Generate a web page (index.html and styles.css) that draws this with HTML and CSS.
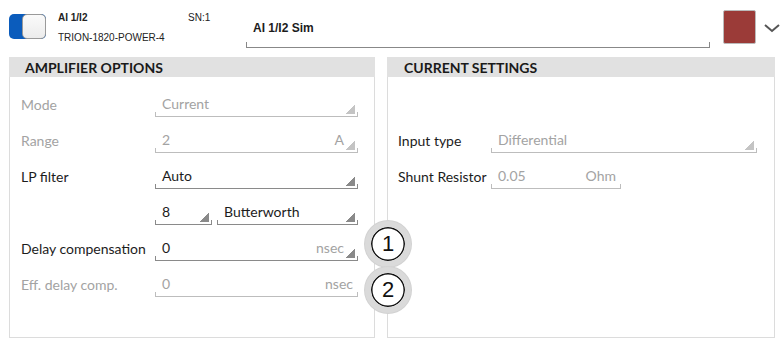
FILE: index.html
```html
<!DOCTYPE html>
<html lang="en">
<head>
  <meta charset="UTF-8">
  <title>AI 1/I2 Settings</title>
  <link rel="stylesheet" href="styles.css">
</head>
<body>
  <!-- Channel header -->
  <div class="topbar">
    <div class="toggle"><span class="knob"></span></div>
    <div class="info">
      <div class="info-line"><b class="ch">AI 1/I2</b><span>SN:1</span></div>
      <div class="info-line">TRION-1820-POWER-4</div>
    </div>
    <div class="name-field">AI 1/I2 Sim</div>
    <div class="swatch"></div>
    <svg class="chevron" width="18" height="10" viewBox="0 0 18 10">
      <path d="M2 2 L9 8 L16 2" fill="none" stroke="#555" stroke-width="2"/>
    </svg>
  </div>

  <div class="panels">
    <!-- Amplifier options -->
    <div class="panel panel-left">
      <div class="panel-head">AMPLIFIER OPTIONS</div>
      <div class="panel-body">
        <div class="row disabled">
          <div class="label">Mode</div>
          <div class="field drop">Current</div>
        </div>
        <div class="row disabled">
          <div class="label">Range</div>
          <div class="field drop">2<span class="unit">A</span></div>
        </div>
        <div class="row">
          <div class="label">LP filter</div>
          <div class="field drop">Auto</div>
        </div>
        <div class="row">
          <div class="label"></div>
          <div class="field drop small">8</div>
          <div class="field drop">Butterworth</div>
        </div>
        <div class="row">
          <div class="label">Delay compensation</div>
          <div class="field drop">0<span class="unit gray">nsec</span></div>
        </div>
        <div class="row disabled">
          <div class="label">Eff. delay comp.</div>
          <div class="field">0<span class="unit">nsec</span></div>
        </div>
      </div>
      <div class="marker m1">1</div>
      <div class="marker m2">2</div>
    </div>

    <!-- Current settings -->
    <div class="panel panel-right">
      <div class="panel-head">CURRENT SETTINGS</div>
      <div class="panel-body">
        <div class="row"></div>
        <div class="row">
          <div class="label">Input type</div>
          <div class="field drop off wide">Differential</div>
        </div>
        <div class="row">
          <div class="label">Shunt Resistor</div>
          <div class="field shunt off">0.05<span class="unit">Ohm</span></div>
        </div>
      </div>
    </div>
  </div>
</body>
</html>
```

FILE: styles.css
```css
/* Basis */
* {
  box-sizing: border-box;
}

body {
  margin: 0;
  background: #fff;
  color: #1c1c1c;
  font-family: 'Lato', 'Liberation Sans', sans-serif;
  font-size: 14px;
}

/* Kopfzeile */
.topbar {
  display: flex;
  align-items: center;
  height: 57px;
  padding-left: 9px;
}

.toggle {
  position: relative;
  width: 37px;
  height: 25px;
  background: #0b5cbc;
  border-radius: 5px;
  margin-top: -5px;
}

.toggle .knob {
  position: absolute;
  right: 0;
  top: 0;
  width: 24px;
  height: 25px;
  background: linear-gradient(#fafafa, #ececec);
  border: 1px solid #9a9a9a;
  border-radius: 5px;
}

.info {
  margin-left: 12px;
  width: 188px;
  font-family: 'Liberation Sans', sans-serif;
  font-size: 10px;
  color: #222;
  margin-top: -2px;
}

.info-line {
  display: flex;
  height: 20px;
  align-items: center;
}

.info .ch {
  width: 130px;
}

.name-field {
  position: relative;
  width: 464px;
  height: 27px;
  padding-left: 7px;
  margin-top: 12px;
  border-bottom: 1px solid #888;
  font-family: 'Liberation Sans', sans-serif;
  font-weight: bold;
  font-size: 12px;
  line-height: 14px;
}

.name-field::before,
.name-field::after {
  content: '';
  position: absolute;
  bottom: 0;
  width: 1px;
  height: 5px;
  background: #888;
}

.name-field::before { left: 0; }
.name-field::after { right: 0; }

.swatch {
  width: 33px;
  height: 34px;
  margin-left: 13px;
  margin-top: -4px;
  background: #9b3b38;
  border: 1px solid #bbb;
  border-radius: 2px;
}

.chevron {
  margin-left: 7px;
  margin-top: -2px;
}

/* Bereiche */
.panels {
  display: flex;
  gap: 12px;
  padding-left: 9px;
  padding-right: 8px;
}

.panel {
  position: relative;
  display: flex;
  flex-direction: column;
  height: 281px;
}

.panel-left { width: 366px; }
.panel-right { width: 388px; }

.panel-head {
  height: 20px;
  line-height: 21px;
  background: #e1e1e1;
  padding-left: 16px;
  font-weight: bold;
  font-size: 14px;
  color: #1a1a1a;
}

.panel-right .panel-head { padding-left: 17px; }

.panel-body {
  flex: 1;
  border: 1px solid #dcdcdc;
  border-top: none;
  padding: 9px 16px 0 11px;
}

.panel-right .panel-body {
  padding-left: 10px;
}

.row {
  display: flex;
  align-items: center;
  gap: 5px;
  height: 36px;
}

.label {
  width: 129px;
  flex-shrink: 0;
  white-space: nowrap;
}

.panel-right .label { width: 88px; }

.disabled .label,
.disabled .field,
.unit.gray,
.field.off {
  color: #a3a3a3;
}

/* Eingabefelder */
.field {
  position: relative;
  flex: 1;
  display: flex;
  justify-content: space-between;
  height: 21px;
  padding: 0 5px 0 7px;
  border-bottom: 1px solid #8a8a8a;
  line-height: 16px;
  margin-top: 4px;
}

.disabled .field,
.field.off {
  border-bottom-color: #bdbdbd;
}

.field::before,
.field::after {
  content: '';
  position: absolute;
  bottom: 0;
  width: 1px;
  height: 4px;
  background: #8a8a8a;
}

.disabled .field::before,
.disabled .field::after,
.field.off::before,
.field.off::after {
  background: #bdbdbd;
}

.field::before { left: 0; }
.field::after { right: 0; }

.field.small {
  flex: 0 0 57px;
}

.field.shunt {
  flex: 0 0 130px;
}

.field.wide {
  flex: 0 0 266px;
}

/* Dreieck unten rechts */
.field.drop {
  padding-right: 14px;
  background-image: linear-gradient(to bottom right, transparent 50%, #8a8a8a 50%);
  background-size: 10px 9px;
  background-position: right 3px bottom 2px;
  background-repeat: no-repeat;
}

.disabled .field.drop,
.field.drop.off {
  background-image: linear-gradient(to bottom right, transparent 50%, #c4c4c4 50%);
}

/* Markierungen */
.marker {
  position: absolute;
  left: 356px;
  width: 46px;
  height: 46px;
  border: 6px solid #dadada;
  border-radius: 50%;
  background: #fff;
  box-shadow: 0 0 0 1px #d2d2d2, inset 0 0 0 1.5px #111;
  text-align: center;
  line-height: 34px;
  font-family: 'Liberation Sans', sans-serif;
  font-size: 22px;
  color: #111;
  z-index: 1;
}

.m1 { top: 164px; }
.m2 { top: 210px; }
```
